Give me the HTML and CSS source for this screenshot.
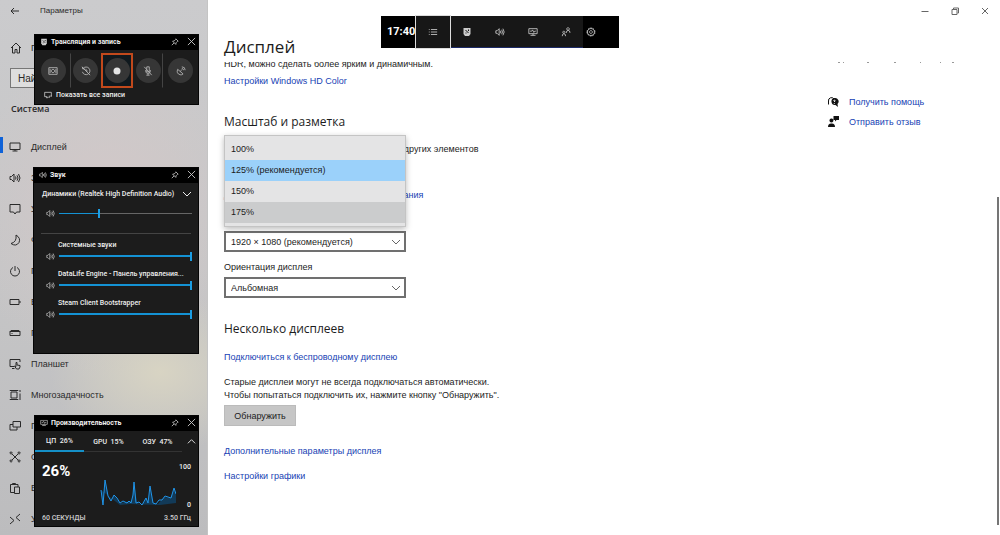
FILE: index.html
```html
<!DOCTYPE html>
<html lang="ru">
<head>
<meta charset="utf-8">
<title>Параметры</title>
<link rel="stylesheet" href="styles.css">
</head>
<body>
<svg class="defs" aria-hidden="true">
  <symbol id="pin" viewBox="0 0 10 10"><path d="M6 1l3 3-1 .3L6.300 6l-.3 2L2 4l2-.3L5.700 2zM4 6L1 9"/></symbol>
  <symbol id="close" viewBox="0 0 10 10"><path d="M1 1l8 8M9 1L1 9"/></symbol>
  <symbol id="sound" viewBox="0 0 12 10"><path d="M1 3.500v3h1.500L5 9V1L2.500 3.500zM6.500 3.500q1 1.500 0 3M8 2.300q2 2.700 0 5.400M9.500 1q3 4 0 8"/></symbol>
  <symbol id="chev" viewBox="0 0 10 10"><path d="M1 3l4 4 4-4"/></symbol>
  <symbol id="monitor" viewBox="0 0 12 10"><path d="M1 1h10v6.500H1zM6 7.500v1.500M3.500 9h5"/></symbol>
  <symbol id="badge" viewBox="0 0 10 10"><path class="fill" d="M1.500 1h7v6l-1.500 2h-4L1.500 7z"/><path class="cut" d="M3.500 3l3 3M6.500 2.500v1.500M3.500 6h1"/></symbol>
  <symbol id="perf" viewBox="0 0 12 10"><path d="M1 1h10v6H1zM3 9h6M6 7v2M2.500 4h2l1-1.500 1.500 3 1-1.500h1.500"/></symbol>
</svg>

<div class="app">
  <aside class="sidebar">
    <header class="titlebar">
      <button class="plain" aria-label="Назад"><svg class="ico back" viewBox="0 0 12 12"><path d="M10 6H2M5 3L2 6l3 3"/></svg></button>
      <span>Параметры</span>
    </header>
    <a class="home" href="#"><svg class="ico" viewBox="0 0 12 12"><path d="M1 6l5-5 5 5M2.500 5v6h2.500V7.500h2V11h2.500V5"/></svg><span>Главная</span></a>
    <input class="search" type="text" value="Найти параметр" aria-label="Найти параметр">
    <h2 class="group">Система</h2>
    <nav class="nav">
      <a href="#" class="current"><svg class="ico" viewBox="0 0 12 10"><use href="#monitor"/></svg><span>Дисплей</span></a>
      <a href="#"><svg class="ico" viewBox="0 0 12 10"><use href="#sound"/></svg><span>Звук</span></a>
      <a href="#"><svg class="ico" viewBox="0 0 12 12"><path d="M1 1.500h10v7.500H7.500L6 11 4.500 9H1z"/></svg><span>Уведомления</span></a>
      <a href="#"><svg class="ico" viewBox="0 0 12 12"><path d="M7 1q5 3 3 7.500Q7 13 2 9.500 8 8 7 1z"/></svg><span>Фокусировка</span></a>
      <a href="#"><svg class="ico" viewBox="0 0 12 12"><path d="M4 2.500a4.500 4.500 0 1 0 4 0M6 1v5"/></svg><span>Питание</span></a>
      <a href="#"><svg class="ico" viewBox="0 0 12 12"><path d="M1 3.500h9v5H1zM11 5v2"/></svg><span>Батарея</span></a>
      <a href="#"><svg class="ico" viewBox="0 0 12 12"><path d="M1 4.500h10v4H1zM1 4.500L2 3.500h8l1 1M2.500 6.500h1"/></svg><span>Память</span></a>
      <a href="#"><svg class="ico" viewBox="0 0 12 12"><path d="M5 8.500H1v-7h10V4M3 10.500h2.500M7.500 11L5.500 8l1.500.5V4.500h1V7l3 .5V9l-1 2z"/></svg><span>Планшет</span></a>
      <a href="#"><svg class="ico" viewBox="0 0 12 12"><path d="M2 3h6v6H2zM1 1v.5h8V1M1 11v-.5h8v.5M11 1v2M11 4.500v6.500"/></svg><span>Многозадачность</span></a>
      <a href="#"><svg class="ico" viewBox="0 0 12 12"><path d="M4 1.500h7.500V7H4zM4 4.500H1V10h7V7"/></svg><span>Проецирование</span></a>
      <a href="#"><svg class="ico" viewBox="0 0 12 12"><path d="M3 3l6 6M9 3L3 9M2 1a1 1 0 1 0 .1 0M10 1a1 1 0 1 0 .1 0M2 9a1 1 0 1 0 .1 0M10 9a1 1 0 1 0 .1 0"/></svg><span>Общие</span></a>
      <a href="#"><svg class="ico" viewBox="0 0 12 12"><path d="M5 10.500H1.500v-8H9V5M3.500 2.500v-1h3v1M5.500 5h5v6.500h-5z"/></svg><span>Буфер обмена</span></a>
      <a href="#"><svg class="ico" viewBox="0 0 12 12"><path d="M1 4l4 3.500L1 11M11 1L7 4.500 11 8"/></svg><span>Удаленный</span></a>
    </nav>
  </aside>

  <main class="main">
    <header class="head">
      <h1>Дисплей</h1>
      <div class="winbtns">
        <button class="plain" aria-label="Свернуть"><svg class="ico" viewBox="0 0 10 10"><path d="M1.500 5.500h7"/></svg></button>
        <button class="plain" aria-label="Развернуть"><svg class="ico" viewBox="0 0 10 10"><path d="M2 3.500h5v5H2zM3.500 3V2h5v5H7.500"/></svg></button>
        <button class="plain" aria-label="Закрыть"><svg class="ico" viewBox="0 0 10 10"><path d="M2 2l6 6M8 2L2 8"/></svg></button>
      </div>
    </header>
    <div class="scroll">
      <section class="content">
        <p class="hdr">HDR, можно сделать более ярким и динамичным.</p>
        <a href="#">Настройки Windows HD Color</a>

        <h2>Масштаб и разметка</h2>
        <div class="scale">
          <p>Изменение размера текста, приложений и других элементов</p>
          <a href="#" class="more">Дополнительные параметры масштабирования</a>
          <div class="dropdown" role="listbox" aria-label="Масштаб">
            <div role="option">100%</div>
            <div role="option" aria-selected="true" class="sel">125% (рекомендуется)</div>
            <div role="option">150%</div>
            <div role="option" class="hover">175%</div>
          </div>
        </div>
        <label for="res">Разрешение дисплея</label>
        <div class="combo"><select id="res"><option>1920 × 1080 (рекомендуется)</option></select><svg class="ico" viewBox="0 0 10 10"><use href="#chev"/></svg></div>
        <label for="orient" class="gap">Ориентация дисплея</label>
        <div class="combo"><select id="orient"><option>Альбомная</option></select><svg class="ico" viewBox="0 0 10 10"><use href="#chev"/></svg></div>

        <h2 class="multi">Несколько дисплеев</h2>
        <a href="#">Подключиться к беспроводному дисплею</a>
        <p class="old">Старые дисплеи могут не всегда подключаться автоматически.<br>Чтобы попытаться подключить их, нажмите кнопку "Обнаружить".</p>
        <button class="detect">Обнаружить</button>
        <a href="#">Дополнительные параметры дисплея</a>
        <a href="#" class="gfx">Настройки графики</a>
      </section>
      <aside class="help">
        <svg class="tails" viewBox="0 0 120 2" aria-hidden="true"><path d="M1 .5h2M6 .5h1M30 .5h2M57 .5h2M83 .5h1M103 .5h1M115 .5h2"/></svg>
        <a href="#"><svg class="solid" viewBox="0 0 12 12"><path class="ring" d="M1.500 8.500V5a3 3 0 0 1 5.500-2"/><path d="M7.500 2a3.500 3.500 0 1 0 1 7l2.500 2-.5-3A3.500 3.500 0 0 0 7.500 2z"/><path class="mark" d="M6.500 4.500q1.500-1 1.500.3L7.300 6M7.300 7v.8"/></svg><span>Получить помощь</span></a>
        <a href="#"><svg class="solid" viewBox="0 0 12 12"><path d="M6.500 0H12v4H9.500L8 5.500V4H6.500zM4.500 2.500a2 2 0 1 1-.1 0zM1 11q0-3.500 3-3.500h1q3 0 3 3.500z"/></svg><span>Отправить отзыв</span></a>
      </aside>
      <div class="thumb"></div>
    </div>
  </main>
</div>

<div class="gamebar">
  <time>17:40</time>
  <button class="active" aria-label="Мини-приложения"><svg class="ico" viewBox="0 0 12 10"><path d="M1 2h1M1 5h1M1 8h1M3.500 2H11M3.500 5H11M3.500 8H11"/></svg></button>
  <button aria-label="Запись"><svg class="ico" viewBox="0 0 10 10"><use href="#badge"/></svg></button>
  <button aria-label="Звук"><svg class="ico" viewBox="0 0 12 10"><use href="#sound"/></svg></button>
  <button aria-label="Производительность"><svg class="ico" viewBox="0 0 12 10"><use href="#perf"/></svg></button>
  <button aria-label="Друзья"><svg class="ico" viewBox="0 0 12 12"><path d="M8.500 .8a1.500 1.500 0 1 1-.1 0M6.500 7q0-3 2-3 2.300 0 2.300 3M3.500 5a1.300 1.300 0 1 1-.1 0M1.500 11q0-3 2-3t2 3"/></svg></button>
  <button class="gear" aria-label="Настройки"><svg class="ico" viewBox="0 0 12 12"><path d="M6 1.800a4.200 4.200 0 1 1-.1 0M6 4.300a1.700 1.700 0 1 1-.1 0"/><path class="teeth" d="M6 6m-4.800 0a4.800 4.800 0 1 0 9.600 0a4.800 4.800 0 1 0-9.600 0"/></svg></button>
</div>

<section class="widget capture">
  <header><svg class="ico" viewBox="0 0 10 10"><use href="#badge"/></svg><h3>Трансляция и запись</h3><button class="plain" aria-label="Закрепить"><svg class="ico"><use href="#pin"/></svg></button><button class="plain" aria-label="Закрыть"><svg class="ico"><use href="#close"/></svg></button></header>
  <div class="round-row">
    <div class="cell wide line"><button aria-label="Снимок экрана"><svg class="ico" viewBox="0 0 12 12"><path d="M1 2h10v8H1zM6 4a2 2 0 1 1-.1 0M2.500 3.500v5M9.500 3.500v5"/></svg></button></div>
    <div class="cell"><button aria-label="Записать последнее"><svg class="ico" viewBox="0 0 12 12"><path d="M2.500 3a4.600 4.600 0 1 1-.8 4M2 1v2.500h2.500M1 1l10 10M6 3.500V6h2"/></svg></button></div>
    <div class="cell rec"><button aria-label="Начать запись"><svg class="dot" viewBox="0 0 10 10"><circle cx="5" cy="5" r="3.500"/></svg></button></div>
    <div class="cell line"><button aria-label="Микрофон"><svg class="ico" viewBox="0 0 12 12"><path d="M4.500 1h3v6h-3zM3 5q0 4 3 4t3-4M6 9v2M4 11h4M1.500 1l9 10"/></svg></button></div>
    <div class="cell wide"><button aria-label="Трансляция"><svg class="ico" viewBox="0 0 12 12"><path d="M2 4q-2 5 3 6.500 2 .5 3.500-1zM5 6.500L7 4.500M7 1q4 0 4 4M7 3q2 0 2 2"/></svg></button></div>
  </div>
  <a href="#" class="all"><svg class="ico" viewBox="0 0 12 10"><path d="M5 7.500H1V1h10v6M3 9h3M8 6v2.500M6.500 8.500h2M10.500 5.500v2.500"/></svg><span>Показать все записи</span></a>
</section>

<section class="widget audio">
  <header><svg class="ico" viewBox="0 0 12 10"><use href="#sound"/></svg><h3>Звук</h3><button class="plain" aria-label="Закрепить"><svg class="ico"><use href="#pin"/></svg></button><button class="plain" aria-label="Закрыть"><svg class="ico"><use href="#close"/></svg></button></header>
  <div class="device"><label for="v0">Динамики (Realtek High Definition Audio)</label><svg class="ico" viewBox="0 0 10 10"><use href="#chev"/></svg></div>
  <div class="vol"><svg class="ico" viewBox="0 0 12 10"><use href="#sound"/></svg><input id="v0" class="part" type="range" value="30"></div>
  <hr>
  <label for="v1">Системные звуки</label>
  <div class="vol"><svg class="ico" viewBox="0 0 12 10"><use href="#sound"/></svg><input id="v1" type="range" value="100"></div>
  <label for="v2">DataLife Engine - Панель управления...</label>
  <div class="vol"><svg class="ico" viewBox="0 0 12 10"><use href="#sound"/></svg><input id="v2" type="range" value="100"></div>
  <label for="v3">Steam Client Bootstrapper</label>
  <div class="vol"><svg class="ico" viewBox="0 0 12 10"><use href="#sound"/></svg><input id="v3" type="range" value="100"></div>
</section>

<section class="widget cpu">
  <header><svg class="ico" viewBox="0 0 12 10"><use href="#perf"/></svg><h3>Производительность</h3><button class="plain" aria-label="Закрепить"><svg class="ico"><use href="#pin"/></svg></button><button class="plain" aria-label="Закрыть"><svg class="ico"><use href="#close"/></svg></button></header>
  <div class="tabs">
    <button class="on">ЦП&nbsp; 26%</button><button>GPU&nbsp; 15%</button><button>ОЗУ&nbsp; 47%</button>
    <svg class="ico up" viewBox="0 0 10 10"><use href="#chev"/></svg>
  </div>
  <div class="stat">
    <strong>26%</strong>
    <svg class="graph" viewBox="0 0 76 28"><path class="area" d="M1 11L3 26 5 1 8 17 11 22 14 16 20 24 32 22 34 3 37 24 42 26 46 19 48 24 50 7 53 24 58 25 64 18 71 19 74 9 76 15V24L60 26 30 25 20 26z"/><path class="trace" d="M1 11L3 26 5 1 8 17 11 22 14 16 17 19 20 24 23 22 27 24 29 22 31 24 33 16 34 3 36 24 39 23 42 26 46 19 48 24 50 7 53 24 56 25 59 21 62 21 65 17 71 19 74 9 76 15"/></svg>
    <div class="axis"><span>100</span><span>0</span></div>
  </div>
  <footer><span>60 СЕКУНДЫ</span><span>3.50 ГГц</span></footer>
</section>
</body>
</html>
```

FILE: styles.css
```css
* { box-sizing: border-box; }
body { margin: 0; min-height: 100vh; background: #fff; color: #1c1c1c; font: 9px/12px "Liberation Sans", Arial, sans-serif; overflow: hidden; }
h1, h2, h3, p { margin: 0; font-weight: 400; }
a { color: #1742b4; text-decoration: none; }
button, input, select { font: inherit; color: inherit; }
.defs { position: absolute; width: 0; height: 0; }
.ico { width: 12px; height: 12px; flex: none; fill: none; stroke: currentColor; stroke-width: 1; }
.fill { fill: currentColor; stroke: none; }
.cut { stroke: #111; }
.plain { display: flex; padding: 0; border: 0; background: none; }

.app { display: flex; height: 100vh; }
.sidebar { width: 208px; flex: none; overflow: hidden; color: #2a2a2a; border-right: 1px solid #c4c4c4;
  background: radial-gradient(ellipse 110px 80px at 160px 372px, #d8d4c3, transparent), radial-gradient(ellipse 140px 170px at 110px 210px, #d3c8c8, transparent), linear-gradient(#cbcbcd, #c6c6c7 50%, #bcbcbe); }
.titlebar { display: flex; align-items: center; gap: 19px; height: 22px; padding-left: 9px; font-size: 8px; }
.home { display: flex; align-items: center; gap: 9px; height: 20px; margin-top: 16px; padding-left: 10px; color: inherit; }
.search { display: block; width: 188px; height: 20px; margin: 10px 0 0 10px; padding: 0 7px; border: 1px solid #777; background: #dedede; font-size: 10px; }
.group { margin-top: 14px; padding-left: 11px; font: 600 9px/14px "Open Sans", "Noto Sans", sans-serif; }
.nav { margin-top: 15px; }
.nav a { display: flex; align-items: center; gap: 10px; height: 31px; padding-left: 9px; color: inherit; position: relative; }
.nav .current::before { content: ""; position: absolute; left: 0; top: 6px; width: 3px; height: 16px; background: #0f62d8; }

.main { flex: 1; min-width: 0; display: flex; flex-direction: column; }
.head { display: flex; justify-content: space-between; height: 62px; flex: none; padding: 0 10px 0 16px; }
.head h1 { padding-top: 34px; font: 17px/26px "Open Sans", "Noto Sans", sans-serif; }
.winbtns { display: flex; gap: 20px; height: 22px; align-items: center; }
.winbtns .ico { width: 10px; height: 10px; color: #666; }
.scroll { flex: 1; min-height: 0; display: flex; justify-content: space-between; overflow: hidden; position: relative; padding-left: 16px; }
.content { display: flex; flex-direction: column; align-items: flex-start; }
.content > a { line-height: 14px; }
.hdr { margin-top: -4px; }
.hdr + a { margin-top: 4px; }
.content h2 { font: 12px/18px "Open Sans", "Noto Sans", sans-serif; margin-top: 25px; }
.scale { position: relative; margin-top: 11px; height: 73px; padding-top: 1px; }
.scale .more { display: block; margin-top: 34px; }
.dropdown { position: absolute; left: 0; top: -7px; width: 182px; padding: 3px 0; background: #e4e4e5; border: 1px solid #c4c4c4; box-shadow: 0 2px 6px #0004; z-index: 1; }
.dropdown div { height: 21px; padding-left: 6px; line-height: 21px; }
.dropdown .sel { background: #9bd1fa; }
.dropdown .hover { background: #cbcccd; }
.combo { width: 182px; height: 21px; margin-top: 4px; position: relative; }
.combo select { width: 100%; height: 100%; padding: 0 5px; appearance: none; border: 2px solid #707070; border-radius: 0; background: #fff; }
.combo .ico { position: absolute; right: 5px; top: 6px; width: 10px; height: 10px; pointer-events: none; color: #666; }
.gap { margin-top: 9px; }
.content .multi { margin-top: 22px; }
.multi + a { margin-top: 12px; }
.old { margin-top: 12px; line-height: 13px; }
.detect { width: 72px; height: 21px; margin: 3px 0 18px; padding: 0; border: 1px solid #bbb; background: #c6c6c6; }
.content .gfx { margin-top: 11px; }
.help { width: 172px; }
.tails { display: block; width: 120px; height: 2px; margin-left: 9px; stroke: #999; stroke-width: 1; }
.help a { display: flex; align-items: center; gap: 10px; height: 20px; }
.tails + a { margin-top: 28px; }
.help .solid { margin-left: -1px; }
.solid { width: 12px; height: 12px; fill: #111; }
.ring { fill: none; stroke: #111; }
.mark { fill: none; stroke: #fff; stroke-width: 1; }
.thumb { position: absolute; right: 1px; top: 135px; bottom: 10px; width: 2px; background: #757575; }

.gamebar { position: absolute; left: 381px; top: 16px; height: 32px; width: 238px; display: flex; background: #000; color: #ccc; font-family: Roboto, sans-serif; }
.gamebar time { width: 34px; padding-left: 6px; font-size: 11px; font-weight: 700; line-height: 32px; color: #fff; }
.gamebar button { width: 33px; padding: 0 2px 0 0; border: 0; border-bottom: 1px solid #1c2a66; background: #171717; display: grid; place-items: center; }
.gamebar .ico { width: 10px; height: 10px; }
.gamebar .active { width: 36px; height: 34px; margin-top: -1px; padding: 0; border: 1px solid #ddd; }
.gamebar .gear { width: 18px; background: #000; border: 0; }
.gamebar .teeth { stroke-dasharray: 2 1; }

.widget { position: absolute; left: 34px; width: 165px; background: #1c1c1c; border: 1px solid #050505; color: #eee; font: 500 7px/10px Roboto, sans-serif; }
.widget header { display: flex; align-items: center; gap: 3px; height: 15px; padding: 0 2px 2px 5px; background: #000; }
.widget header .ico { width: 8px; height: 8px; color: #ccc; }
.widget header h3 { flex: 1; font-size: 7px; font-weight: 700; }
.widget header .plain + .plain { margin-left: 5px; }
.widget header .plain + .plain .ico { width: 9px; height: 9px; }
.capture { top: 34px; height: 71px; }
.round-row { display: flex; padding: 3px 0 0 1px; }
.cell { width: 30px; height: 35px; display: grid; place-items: center; border: 1px solid transparent; }
.cell.wide { width: 35px; }
.cell.line { border-right-color: #444; }
.cell.rec { width: 33px; border: 2px solid #c1491c; background: #10191e; }
.cell button { display: grid; place-items: center; width: 25px; height: 25px; padding: 0; border: 0; border-radius: 50%; background: #363636; color: #bbb; }
.cell .ico { width: 10px; height: 10px; }
.dot { width: 10px; height: 10px; fill: #e4e4e4; }
.all { display: flex; align-items: center; gap: 4px; padding: 0 9px; color: #eee; height: 13px; }
.all .ico { width: 8px; height: 8px; }
.audio { top: 167px; height: 187px; left: 33px; width: 166px; }
.device { display: flex; justify-content: space-between; align-items: center; height: 21px; padding: 0 6px 0 8px; white-space: nowrap; }
.device .ico { width: 10px; height: 10px; }
.vol { display: flex; align-items: center; gap: 4px; padding: 0 6px 0 12px; height: 12px; }
.vol .ico { width: 9px; height: 9px; color: #bbb; }
.vol input { flex: 1; min-width: 0; height: 9px; margin: 0; appearance: none; background: linear-gradient(#1492d4, #1492d4) center / 100% 2px no-repeat; }
.vol .part { background: linear-gradient(90deg, #1492d4 30%, #666 30%) center / 100% 1px no-repeat; }
.vol input::-webkit-slider-thumb { appearance: none; width: 2px; height: 9px; background: #1c9ee4; }
.device + .vol { margin-top: 3px; }
.audio hr { margin: 14px 7px 6px; border: 0; border-top: 1px solid #444; }
.audio > label { display: block; padding-left: 24px; height: 10px; white-space: nowrap; }
.audio > label ~ label { margin-top: 7px; }
.cpu { top: 415px; height: 112px; }
.tabs { display: flex; align-items: center; height: 21px; }
.tabs button { width: 49px; height: 21px; padding: 1px 0 0; border: 0; border-bottom: 1px solid #333; background: none; white-space: nowrap; }
.tabs .on { border-bottom: 2px solid #1590c8; }
.tabs .up { width: 9px; height: 9px; margin-left: 5px; transform: rotate(180deg); }
.stat { display: flex; justify-content: space-between; height: 58px; padding: 10px 7px 0; }
.stat strong { width: 58px; font-size: 15px; line-height: 18px; color: #fff; }
.graph { width: 76px; height: 28px; margin-top: 17px; }
.trace { fill: none; stroke: #2094e8; stroke-width: 1; }
.area { fill: #123a58; }
.axis { flex: 1; display: flex; flex-direction: column; justify-content: space-between; text-align: right; }
.cpu footer { display: flex; justify-content: space-between; padding: 3px 7px; color: #ccc; }
```
